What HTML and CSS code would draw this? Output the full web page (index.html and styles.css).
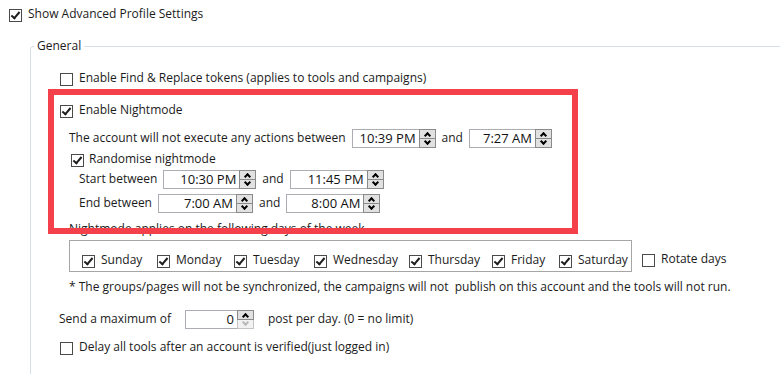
FILE: index.html
```html
<!DOCTYPE html>
<html lang="en">
<head>
  <meta charset="UTF-8">
  <title>Profile Settings</title>
  <link rel="stylesheet" href="styles.css">
</head>
<body>
<div class="page">
  <!-- Top toggle -->
  <label class="check top-check"><span class="cb on"></span>Show Advanced Profile Settings</label>

  <fieldset class="group">
    <legend>General</legend>

    <label class="check row row-find"><span class="cb"></span>Enable Find &amp; Replace tokens (applies to tools and campaigns)</label>
    <label class="check row row-night"><span class="cb on"></span>Enable Nightmode</label>

    <div class="row row-between">
      <span>The account will not execute any actions between</span>
      <span class="spin"><span class="spin-value w67">10:39 PM</span><span class="spin-btns"><span class="spin-btn up"></span><span class="spin-btn down"></span></span></span>
      <span>and</span>
      <span class="spin"><span class="spin-value w66">7:27 AM</span><span class="spin-btns"><span class="spin-btn up"></span><span class="spin-btn down"></span></span></span>
    </div>

    <label class="check row row-random"><span class="cb on"></span>Randomise nightmode</label>

    <div class="row row-start">
      <span>Start between</span>
      <span class="spin"><span class="spin-value w76">10:30 PM</span><span class="spin-btns"><span class="spin-btn up"></span><span class="spin-btn down"></span></span></span>
      <span>and</span>
      <span class="spin"><span class="spin-value w77">11:45 PM</span><span class="spin-btns"><span class="spin-btn up"></span><span class="spin-btn down"></span></span></span>
    </div>

    <div class="row row-end">
      <span>End between</span>
      <span class="spin"><span class="spin-value w78">7:00 AM</span><span class="spin-btns"><span class="spin-btn up"></span><span class="spin-btn down"></span></span></span>
      <span>and</span>
      <span class="spin"><span class="spin-value w77">8:00 AM</span><span class="spin-btns"><span class="spin-btn up"></span><span class="spin-btn down"></span></span></span>
    </div>

    <div class="row row-applies">Nightmode applies on the following days of the week</div>

    <div class="days-line">
      <div class="days">
        <label class="check day"><span class="cb on"></span>Sunday</label>
        <label class="check day"><span class="cb on"></span>Monday</label>
        <label class="check day"><span class="cb on"></span>Tuesday</label>
        <label class="check day"><span class="cb on"></span>Wednesday</label>
        <label class="check day"><span class="cb on"></span>Thursday</label>
        <label class="check day"><span class="cb on"></span>Friday</label>
        <label class="check day"><span class="cb on"></span>Saturday</label>
      </div>
      <label class="check day rotate"><span class="cb"></span>Rotate days</label>
    </div>

    <div class="row row-note">* The groups/pages will not be synchronized, the campaigns will not&nbsp; publish on this account and the tools will not run.</div>

    <div class="row row-send">
      <span>Send a maximum of</span>
      <span class="spin"><span class="spin-value w52 num">0</span><span class="spin-btns"><span class="spin-btn up"></span><span class="spin-btn down off"></span></span></span>
      <span>post per day. (0 = no limit)</span>
    </div>

    <label class="check row row-delay"><span class="cb"></span>Delay all tools after an account is verified(just logged in)</label>
  </fieldset>

  <!-- red highlight drawn over the nightmode block -->
  <div class="highlight"></div>
</div>
</body>
</html>
```

FILE: styles.css
```css
html, body {
  margin: 0;
  padding: 0;
}

body {
  font-family: "Open Sans", "Noto Sans", sans-serif;
  font-size: 12px;
  line-height: 16px;
  color: #1b1b1b;
  background: #fff;
  overflow: hidden;
}

.page {
  position: relative;
  width: 780px;
  height: 374px;
  overflow: hidden;
}

/* checkboxes */
.check {
  display: flex;
  align-items: center;
  gap: 6px;
  height: 20px;
}

.cb {
  position: relative;
  flex: none;
  width: 13px;
  height: 13px;
  margin-top: 2px;
  box-sizing: border-box;
  border: 1px solid #4a4a4a;
  background: #fff;
}

.cb.on::after {
  content: "";
  position: absolute;
  left: 3px;
  top: 0px;
  width: 3px;
  height: 7px;
  border-right: 2px solid #1e1e1e;
  border-bottom: 2px solid #1e1e1e;
  transform: rotate(40deg);
}

.top-check {
  margin: 4px 0 0 9px;
}

/* group box */
.group {
  margin: 14px 0 0 30px;
  padding: 0 0 40px 0;
  width: 800px;
  border: 1px solid #d5dfe5;
  border-radius: 3px;
}

.group legend {
  margin-left: 3px;
  padding: 0 3px;
  line-height: 16px;
}

.row {
  display: flex;
  align-items: center;
  gap: 6px;
  height: 20px;
}

.row-find   { margin: 14px 0 0 29px; }
.row-night  { margin: 12px 0 0 29px; }
.row-between { margin: 8px 0 0 38px; }
.row-random { margin: 1px 0 0 40px; }
.row-start  { margin: 0 0 0 48px; }
.row-end    { margin: 4px 0 0 48px; }
.row-applies { margin: 6px 0 0 38px; }
.row-note   { margin: 5px 0 0 38px; }
.row-send   { margin: 12px 0 0 28px; gap: 14px; }
.row-delay  { margin: 8px 0 0 29px; }

.row-random .cb { margin-right: -1px; }

/* spinners */
.spin {
  display: flex;
  height: 19px;
}

.spin-value {
  box-sizing: border-box;
  height: 19px;
  padding-right: 3px;
  border: 1px solid #abadb3;
  border-right: none;
  font-size: 13px;
  line-height: 17px;
  text-align: right;
  color: #111;
}

.w52 { width: 52px; }
.w66 { width: 66px; }
.w67 { width: 67px; }
.w76 { width: 76px; }
.w77 { width: 77px; }
.w78 { width: 78px; }

.spin-btns {
  display: flex;
  flex-direction: column;
  width: 17px;
}

.spin-btn {
  position: relative;
  flex: 1;
  box-sizing: border-box;
  border: 1px solid #8a8a8a;
  background: #e1e1e1;
}

.spin-btn.down {
  border-top: none;
}

.spin-btn::after {
  content: "";
  position: absolute;
  left: 5px;
  width: 3px;
  height: 3px;
  border-left: 2px solid #000;
  border-top: 2px solid #000;
}

.spin-btn.up::after {
  top: 3px;
  transform: rotate(45deg);
}

.spin-btn.down::after {
  top: 0px;
  transform: rotate(225deg);
}

.spin-btn.off {
  border-color: #c4c4c4;
  background: #f2f2f2;
}

.spin-btn.off::after {
  border-color: #b8b8b8;
}

/* days */
.days-line {
  display: flex;
  align-items: center;
  gap: 10px;
  margin: 1px 0 0 38px;
}

.days {
  display: grid;
  grid-template-columns: 75px 77px 80px 95px 83px 67px auto;
  align-items: center;
  box-sizing: border-box;
  width: 563px;
  height: 32px;
  padding: 8px 0 0 12px;
  border: 1px solid #a6a6a6;
}

.rotate {
  padding-top: 6px;
}

/* overlay */
.highlight {
  position: absolute;
  left: 48px;
  top: 89px;
  width: 530px;
  height: 145px;
  box-sizing: border-box;
  border: 6px solid #f4404a;
}
```
